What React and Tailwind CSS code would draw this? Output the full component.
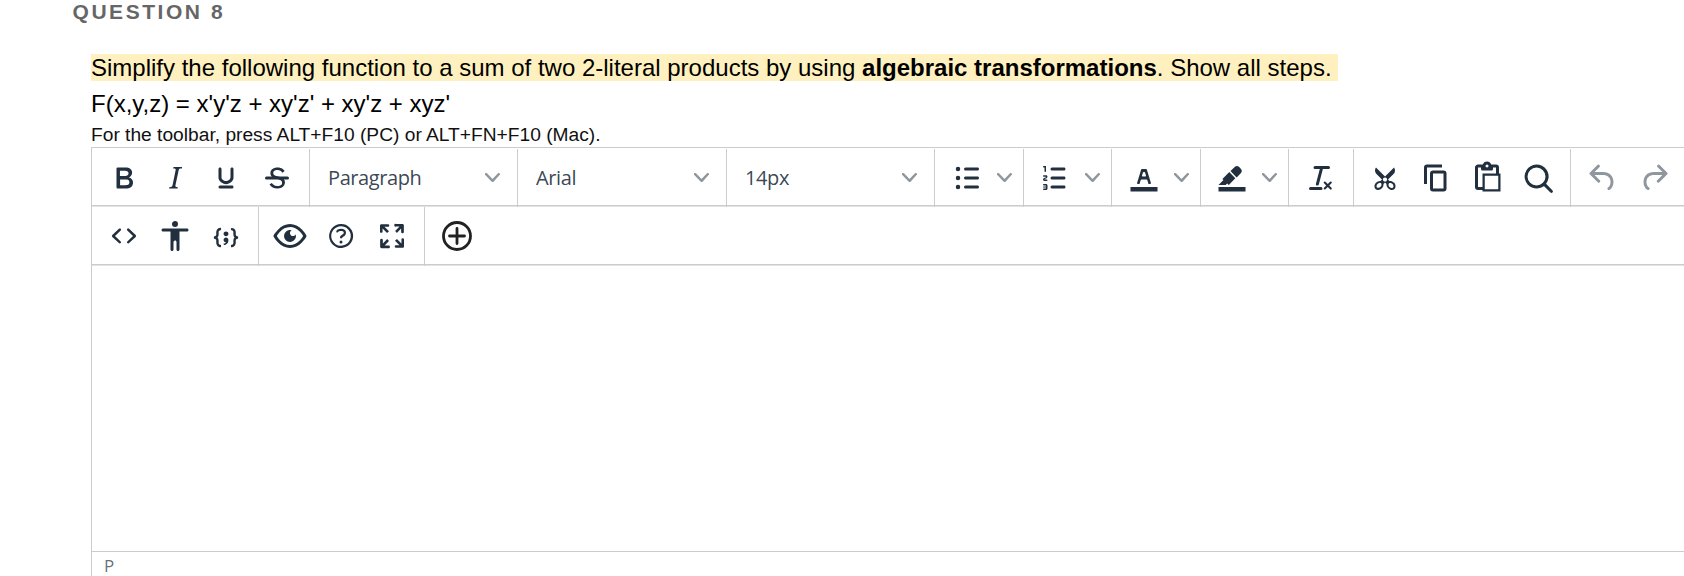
const ICONS = {
  bold: "M7.8 19c-.3 0-.5 0-.6-.2l-.2-.5V5.7c0-.2 0-.4.2-.5l.6-.2h5c1.5 0 2.7.3 3.5 1 .7.6 1.1 1.4 1.1 2.5a3 3 0 0 1-.6 1.9c-.4.6-1 1-1.6 1.2.4.1.9.3 1.3.6s.8.7 1 1.2c.4.4.5 1 .5 1.6 0 1.3-.4 2.3-1.3 3-.8.7-2.1 1-3.8 1H7.8zm5-8.3c.6 0 1.2-.1 1.6-.5.4-.3.6-.7.6-1.3 0-1.1-.8-1.7-2.3-1.7H9.3v3.5h3.4zm.5 6c.7 0 1.3-.1 1.7-.4.4-.4.6-.9.6-1.5s-.2-1-.7-1.4c-.4-.3-1-.4-2-.4H9.4v3.8h4z",
  italic: "M16.7 4.7l-.1.9h-.3c-.6 0-1 0-1.4.3-.3.3-.4.6-.5 1.1l-2.1 9.8v.6c0 .5.4.8 1.4.8h.2l-.2.8H8l.2-.8h.2c1.1 0 1.8-.5 2-1.5l2-9.8.1-.5c0-.6-.4-.8-1.4-.8h-.3l.2-.9h5.8z",
  underline: "M16 5c.6 0 1 .4 1 1v5.5a4 4 0 0 1-.4 1.8l-1 1.4a5.3 5.3 0 0 1-5.5 1 5 5 0 0 1-1.6-1c-.5-.4-.8-.9-1.1-1.4a4 4 0 0 1-.4-1.8V6c0-.6.4-1 1-1s1 .4 1 1v5.5c0 .3 0 .6.2 1l.6.7a3.3 3.3 0 0 0 2.2.8 3.4 3.4 0 0 0 2.2-.8c.3-.2.4-.5.6-.8l.2-.9V6c0-.6.4-1 1-1zM8 17h8c.6 0 1 .4 1 1s-.4 1-1 1H8a1 1 0 0 1 0-2z",
  strike: "M15.6 8.5c-.5-.7-1-1.1-1.3-1.3-.6-.4-1.3-.6-2-.6-2.7 0-2.8 1.7-2.8 2.1 0 1.6 1.8 2 3.2 2.3 4.4.9 4.6 2.8 4.6 3.9 0 1.4-.7 4.1-5 4.1A6.2 6.2 0 0 1 7 16.4l1.5-1.1c.4.6 1.6 2 3.7 2 1.6 0 2.5-.4 3-1.2.4-.8.3-2-.8-2.6-.7-.4-1.6-.7-2.9-1-1-.2-3.9-.8-3.9-3.6C7.6 6 10.3 5 12.4 5c2.9 0 4.2 1.6 4.7 2.4l-1.5 1.1z",
  strikeBar: "M5 11h14a1 1 0 0 1 0 2H5a1 1 0 0 1 0-2z",
  bullets: "M11 5h8c.6 0 1 .4 1 1s-.4 1-1 1h-8a1 1 0 0 1 0-2zm0 6h8c.6 0 1 .4 1 1s-.4 1-1 1h-8a1 1 0 0 1 0-2zm0 6h8c.6 0 1 .4 1 1s-.4 1-1 1h-8a1 1 0 0 1 0-2zM4.500 6a1.500 1.500 0 1 1 3 0a1.500 1.500 0 1 1-3 0zM4.500 12a1.500 1.500 0 1 1 3 0a1.500 1.500 0 1 1-3 0zM4.500 18a1.500 1.500 0 1 1 3 0a1.500 1.500 0 1 1-3 0z",
  numbers: "M10 17h8c.6 0 1 .4 1 1s-.4 1-1 1h-8a1 1 0 0 1 0-2zm0-6h8c.6 0 1 .4 1 1s-.4 1-1 1h-8a1 1 0 0 1 0-2zm0-6h8c.6 0 1 .4 1 1s-.4 1-1 1h-8a1 1 0 1 1 0-2zM6 4v3.500c0 .3-.2.5-.5.5a.5.5 0 0 1-.5-.5V5h-.5a.5.5 0 0 1 0-1H6zm-1 8.800l.2.2h1.300c.3 0 .5.2.5.5s-.2.5-.5.5H4.900a1 1 0 0 1-.9-1V13c0-.4.3-.8.6-1l1.200-.4.2-.3a.2.2 0 0 0-.2-.2H4.500a.5.5 0 0 1-.5-.5c0-.3.2-.5.5-.5h1.600c.5 0 .9.4.9 1v.1c0 .4-.3.8-.6 1l-1.200.4-.2.3zM7 17v2c0 .6-.4 1-1 1H4.500a.5.5 0 0 1 0-1h1.200c.2 0 .3-.1.3-.3 0-.2-.1-.3-.3-.3H4.400a.4.4 0 1 1 0-.8h1.300c.2 0 .3-.1.3-.3 0-.2-.1-.3-.3-.3H4.500a.5.5 0 1 1 0-1H6c.6 0 1 .4 1 1z",
  textColor: "M3 18h18v3H3zM8.700 16h-.8a.5.5 0 0 1-.5-.6l2.700-9c.1-.3.3-.4.5-.4h2.800c.2 0 .4.1.5.4l2.700 9a.5.5 0 0 1-.5.6h-.8a.5.5 0 0 1-.4-.4l-.7-2.200c0-.3-.3-.4-.5-.4h-3.400c-.2 0-.4.1-.5.4l-.7 2.200c0 .3-.2.4-.4.4zm2.600-7.600l-.6 2a.5.5 0 0 0 .5.6h1.600a.5.5 0 0 0 .5-.6l-.6-2c0-.3-.3-.4-.5-.4h-.4c-.2 0-.4.1-.5.4z",
  highlight: "M3 18h18v3H3zM7.700 16.700H3l3.300-3.300-.7-.8L10.200 8l4 4.100-4 4.200c-.2.2-.6.2-.8 0l-.6-.7-1.100 1.100zm5-7.500L11 7.400l3-2.900a2 2 0 0 1 2.600 0L18 6c.7.7.7 2 0 2.700l-2.900 2.900-1.800-1.800-.5-.6",
  clear: "M13.2 6a1 1 0 0 1 0 .2l-2.6 10a1 1 0 0 1-1 .8h-.2a.8.8 0 0 1-.8-1l2.6-10H8a1 1 0 1 1 0-2h9a1 1 0 0 1 0 2h-3.800zM5 18h7a1 1 0 0 1 0 2H5a1 1 0 0 1 0-2zm13 1.500L16.500 18 15 19.500a.7.7 0 0 1-1-1l1.500-1.500-1.500-1.500a.7.7 0 0 1 1-1l1.500 1.500 1.500-1.500a.7.7 0 0 1 1 1L17.500 17l1.500 1.500a.7.7 0 0 1-1 1z",
  cut: "M18 15c.6.7 1 1.4 1 2.3 0 .8-.2 1.5-.7 2l-.8.5-1 .2c-.4 0-.8 0-1.2-.3a3.9 3.9 0 0 1-2.1-2.2c-.2-.5-.3-1-.2-1.5l-1-1-1 1c0 .5 0 1-.2 1.5-.1.5-.4 1-.9 1.4-.3.4-.7.6-1.2.8l-1.2.3c-.4 0-.7 0-1-.2-.3 0-.6-.3-.8-.5-.5-.5-.8-1.2-.7-2 0-.9.4-1.6 1-2.2A3.700 3.700 0 0 1 8.600 14H9l1-1-4-4-.5-1a3.300 3.300 0 0 1 0-2c0-.4.3-.7.5-1l6 6 6-6 .5 1a3.300 3.300 0 0 1 0 2c0 .4-.3.7-.5 1l-4 4 1 1h.5c.4 0 .8 0 1.200.3.5.2.9.4 1.200.8zm-8.500 2.200l.1-.4v-.4-.4a1 1 0 0 0-.2-.5 1 1 0 0 0-.4-.2 1.600 1.600 0 0 0-.8 0 2.600 2.600 0 0 0-.8.3 2.500 2.500 0 0 0-.9 1.100l-.1.4v.7l.2.5.5.2h.7a2.500 2.500 0 0 0 .8-.3 2.800 2.800 0 0 0 1-1zm2.500-2.800c.4 0 .7-.1 1-.4.3-.3.4-.6.4-1s-.1-.7-.4-1c-.3-.3-.6-.4-1-.4s-.7.1-1 .4c-.3.3-.4.6-.4 1s.1.7.4 1c.3.3.6.4 1 .4zm5.400 4l.2-.5v-.4-.3a2.600 2.600 0 0 0-.3-.8 2.400 2.400 0 0 0-.7-.7 2.500 2.500 0 0 0-.8-.3 1.500 1.500 0 0 0-.8 0 1 1 0 0 0-.4.2 1 1 0 0 0-.2.5 1.500 1.500 0 0 0 0 .7v.4l.3.4.3.4a2.800 2.800 0 0 0 .8.5l.4.1h.7l.5-.2z",
  copy: "M16 3H6a2 2 0 0 0-2 2v11h2V5h10V3zm1 4a2 2 0 0 1 2 2v10a2 2 0 0 1-2 2h-7a2 2 0 0 1-2-2V9c0-1.200.9-2 2-2h7zm0 12V9h-7v10h7z",
  paste: "M18 9V5h-2v1c0 .6-.4 1-1 1H9a1 1 0 0 1-1-1V5H6v13h3V9h9zM9 20H6a2 2 0 0 1-2-2V5c0-1.100.9-2 2-2h3.200A3 3 0 0 1 12 1a3 3 0 0 1 2.800 2H18a2 2 0 0 1 2 2v4h1v12H9v-1zm1.500-9.500v9h9v-9h-9zM12 3a1 1 0 0 0-1 1c0 .5.4 1 1 1s1-.5 1-1-.4-1-1-1z",
  search: "M16 17.3a8 8 0 1 1 1.4-1.4l4.3 4.4a1 1 0 0 1-1.400 1.400l-4.400-4.300zm-5-.3a6 6 0 1 0 0-12 6 6 0 0 0 0 12z",
  undo: "M6.4 8H12c3.7 0 6.2 2 6.8 5.1.6 2.7-.4 5.6-2.3 6.8a1 1 0 0 1-1-1.8c1.1-.6 1.8-2.7 1.4-4.6-.5-2.1-2.1-3.5-4.9-3.5H6.4l3.3 3.3a1 1 0 1 1-1.4 1.4l-5-5a1 1 0 0 1 0-1.4l5-5a1 1 0 0 1 1.4 1.4L6.4 8z",
  code: "M9.8 15.7c.3.3.3.8 0 1-.3.4-.9.4-1.2 0l-4.4-4.1a.8.8 0 0 1 0-1.2l4.4-4.2c.3-.3.9-.3 1.2 0 .3.3.3.8 0 1.100L6 12l3.800 3.700zM14.200 15.700c-.3.3-.3.8 0 1 .4.4.9.4 1.200 0l4.400-4.100c.3-.3.3-.9 0-1.200l-4.400-4.200a.8.8 0 0 0-1.200 0c-.3.3-.3.8 0 1.100L18 12l-3.800 3.700z",
  a11y: "M12 2a2 2 0 0 1 2 2 2 2 0 0 1-2 2 2 2 0 0 1-2-2c0-1.1.9-2 2-2zm8 7h-5v12c0 .6-.4 1-1 1a1 1 0 0 1-1-1v-5c0-.6-.4-1-1-1a1 1 0 0 0-1 1v5c0 .6-.4 1-1 1a1 1 0 0 1-1-1V9H4a1 1 0 1 1 0-2h16c.6 0 1 .4 1 1s-.4 1-1 1z",
  sample: "M7.1 11a2.8 2.8 0 0 1-.8 2 2.8 2.8 0 0 1 .8 2v1.7c0 .3.1.6.4.8.2.3.5.4.8.4.3 0 .4.2.4.4v.8c0 .2-.1.4-.4.4-.7 0-1.4-.3-2-.8-.5-.6-.8-1.3-.8-2V15c0-.3-.1-.6-.4-.8-.2-.3-.5-.4-.8-.4a.4.4 0 0 1-.4-.4v-.8c0-.2.2-.4.4-.4.3 0 .6-.1.8-.4.3-.2.4-.5.4-.8V9.300c0-.7.3-1.400.8-2 .6-.5 1.300-.8 2-.8.3 0 .4.2.4.4v.8c0 .2-.1.4-.4.4-.3 0-.6.1-.8.4-.3.2-.4.5-.4.8V11zm9.800 0V9.300c0-.3-.1-.6-.4-.8-.2-.3-.5-.4-.8-.4a.4.4 0 0 1-.4-.4V7c0-.2.1-.4.4-.4.7 0 1.400.3 2 .8.5.6.8 1.300.8 2V11c0 .3.1.6.4.8.2.3.5.4.8.4.2 0 .4.2.4.4v.8c0 .2-.2.4-.4.4-.3 0-.6.1-.8.4-.3.2-.4.5-.4.8v1.700c0 .7-.3 1.400-.8 2-.6.5-1.300.8-2 .8a.4.4 0 0 1-.4-.4v-.8c0-.2.1-.4.4-.4.3 0 .6-.1.8-.4.3-.2.4-.5.4-.8V15a2.800 2.800 0 0 1 .8-2 2.800 2.800 0 0 1-.8-2zm-3.300-.4c0 .4-.1.8-.5 1.100-.3.3-.7.5-1.100.5-.4 0-.8-.2-1.100-.5-.4-.3-.5-.7-.5-1.100 0-.5.1-.9.5-1.200.3-.3.7-.4 1.100-.4.4 0 .8.1 1.100.4.4.3.5.7.5 1.200zM12 13c.4 0 .8.1 1.100.5.4.3.5.7.5 1.100 0 1-.1 1.600-.5 2a3 3 0 0 1-1.100 1c-.4.3-.8.4-1.100.4a.5.5 0 0 1-.5-.5V17a3 3 0 0 0 1-.2l.6-.6c-.6 0-1-.2-1.300-.5-.2-.3-.3-.7-.3-1 0-.5.1-1 .5-1.200.3-.4.7-.5 1.100-.5z",
  preview: "M3.5 12.5c.5.8 1.1 1.6 1.8 2.3 2 2 4.2 3.2 6.7 3.2s4.7-1.2 6.7-3.2a16.2 16.2 0 0 0 2.1-2.8 15.7 15.7 0 0 0-2.1-2.8c-2-2-4.2-3.2-6.7-3.2a9.3 9.3 0 0 0-6.7 3.2A16.2 16.2 0 0 0 3.2 12c0 .2.2.3.3.5zm-2.4-1l.7-1.2L4 7.8C6.2 5.4 8.9 4 12 4c3 0 5.8 1.4 8.1 3.8a18.2 18.2 0 0 1 2.8 3.7v1l-.7 1.2-2.1 2.5c-2.3 2.4-5 3.8-8.1 3.8-3 0-5.8-1.4-8.1-3.8a18.2 18.2 0 0 1-2.8-3.7 1 1 0 0 1 0-1zm12-3.3a2 2 0 1 0 2.7 2.6 4 4 0 1 1-2.6-2.6z",
  help: "M12 5.5a6.5 6.5 0 0 0-6 9 6.3 6.3 0 0 0 1.4 2l1 1a6.3 6.3 0 0 0 3.6 1 6.5 6.5 0 0 0 6-9 6.3 6.3 0 0 0-1.4-2l-1-1a6.3 6.3 0 0 0-3.6-1zM12 4a7.8 7.8 0 0 1 5.700 2.300A8 8 0 1 1 12 4zM9.600 9.700a.7.7 0 0 1-.7-.8c0-1.100 1.500-1.800 3.200-1.800 1.800 0 3.200.8 3.200 2.400 0 1.400-.4 2.100-1.500 2.800-.2 0-.3.1-.3.2a2 2 0 0 0-.8.8.8.8 0 0 1-1.400-.6c.3-.7.8-1 1.300-1.500l.4-.2c.7-.4.8-.6.8-1.500 0-.5-.6-.9-1.700-.9-.5 0-1 .1-1.400.3-.2 0-.3.1-.3.2v-.2c0 .4-.4.8-.8.8zM11 16a1 1 0 1 1 2 0a1 1 0 1 1-2 0z",
  fullscreen: "M15.3 10l-1.2-1.3 2.9-3h-2.3a.9.9 0 1 1 0-1.7H19c.5 0 .9.4.9.9v4.4a.9.9 0 1 1-1.8 0V7l-2.9 3zm0 4l3 3v-2.3a.9.9 0 1 1 1.7 0V19c0 .5-.4.9-.9.9h-4.4a.9.9 0 1 1 0-1.800H17l-3-2.900 1.300-1.200zM10 15.400l-2.900 3h2.300a.9.9 0 1 1 0 1.700H5a.9.9 0 0 1-.9-.9v-4.400a.9.9 0 1 1 1.800 0V17l2.900-3 1.200 1.300zM8.700 10L5.700 7v2.300a.9.9 0 0 1-1.700 0V5c0-.5.4-.9.9-.9h4.400a.9.9 0 0 1 0 1.800H7l3 2.900-1.300 1.200z",
}

function Icon({ name }) {
  return (
    <svg viewBox="0 0 24 24" className="w-9 h-9 shrink-0" fill="currentColor" fillRule="evenodd">
      <path d={ICONS[name]} />
      {name === "strike" && <path d={ICONS.strikeBar} />}
    </svg>
  )
}

function Chevron() {
  return (
    <svg viewBox="0 0 10 10" className="w-[15px] h-[15px] shrink-0 opacity-50" fill="currentColor">
      <path d="M8.7 2.2c.3-.3.8-.3 1 0 .4.4.4.9 0 1.2L5.7 7.8c-.3.3-.9.3-1.2 0L.2 3.4a.8.8 0 0 1 0-1.2c.3-.3.8-.3 1.1 0L5 6l3.7-3.8z" />
    </svg>
  )
}

function Group({ className = "", children }) {
  return (
    <div className={`flex items-center shrink-0 border-r border-[#ccc] -mb-0.5 pb-px ${className}`}>
      {children}
    </div>
  )
}

function Button({ icon, className = "" }) {
  return (
    <button className={`w-[51px] h-[51px] shrink-0 flex items-center justify-center ${className}`}>
      <Icon name={icon} />
    </button>
  )
}

function SplitButton({ icon, className }) {
  return (
    <Group className={className}>
      <button className="flex items-center gap-3">
        <Icon name={icon} />
        <Chevron />
      </button>
    </Group>
  )
}

function Select({ label, className }) {
  return (
    <Group className={className}>
      <button className="flex w-full items-center justify-between pl-[18px] pr-[17px]">
        <span className="font-['Open_Sans','Noto_Sans',sans-serif] text-[20px] tracking-[-0.4px] leading-7 pt-px text-[#222f3e]/90">{label}</span>
        <Chevron />
      </button>
    </Group>
  )
}

export default function App() {
  return (
    <div className="h-[576px] w-full overflow-hidden bg-white font-['Liberation_Sans',Arial,sans-serif] flex flex-col">
      <h3 className="pl-[72.5px] h-[50px] text-[21px] leading-6 font-bold tracking-[2.55px] text-[#666]">QUESTION 8</h3>

      <div className="pl-[91px] h-[97px] text-2xl leading-9 text-black whitespace-nowrap">
        <p>
          <span className="bg-[#fff1bf] whitespace-pre">
            Simplify the following function to a sum of two 2-literal products by using{" "}
            <strong>algebraic transformations</strong>. Show all steps.{" "}
          </span>
        </p>
        <p>F(x,y,z) = x'y'z + xy'z' + xy'z + xyz'</p>
        <p className="text-[19.2px] leading-[26px] text-[#111]">For the toolbar, press ALT+F10 (PC) or ALT+FN+F10 (Mac).</p>
      </div>

      {/* Editor */}
      <div className="ml-[91px] flex-1 flex flex-col border-l border-t border-[#ccc] text-[#222f3e]">
        <div className="flex h-[57px] mt-px mb-px shrink-0 border-b border-[#ccc] shadow-[0_1px_0_#e3e3e3]">
          <Group className="w-[218px] pl-1.5">
            <Button icon="bold" />
            <Button icon="italic" />
            <Button icon="underline" />
            <Button icon="strike" />
          </Group>
          <Select label="Paragraph" className="w-[208px]" />
          <Select label="Arial" className="w-[209px]" />
          <Select label="14px" className="w-[208px]" />
          <SplitButton icon="bullets" className="w-[89px] pl-3.5" />
          <SplitButton icon="numbers" className="w-[88px] pl-[13px]" />
          <SplitButton icon="textColor" className="w-[89px] pl-3.5" />
          <SplitButton icon="highlight" className="w-[88px] pl-[13px]" />
          <Group className="w-[65px] pl-1.5">
            <Button icon="clear" />
          </Group>
          <Group className="w-[217px] pl-[5px]">
            <Button icon="cut" />
            <Button icon="copy" />
            <Button icon="paste" />
            <Button icon="search" />
          </Group>
          <div className="flex items-center -mb-0.5 pb-px pl-1.5 shrink-0 opacity-50">
            <Button icon="undo" />
            <Button icon="undo" className="ml-px -scale-x-100" />
          </div>
        </div>

        <div className="flex h-[58px] mb-px shrink-0 border-b border-[#ccc] shadow-[0_1px_0_#e3e3e3]">
          <Group className="w-[167px] pl-1.5">
            <Button icon="code" />
            <Button icon="a11y" />
            <Button icon="sample" />
          </Group>
          <Group className="w-[166px] pl-[5px]">
            <Button icon="preview" />
            <Button icon="help" />
            <Button icon="fullscreen" />
          </Group>
          <button className="w-16 flex items-center justify-center text-[#222]">
            <svg viewBox="0 0 30 30" className="w-[30px] h-[30px]" fill="none" stroke="currentColor" strokeWidth="2.8">
              <circle cx="15" cy="15" r="13.500" />
              <path d="M15 7.500v15M7.500 15h15" strokeLinecap="round" />
            </svg>
          </button>
        </div>

        <div className="flex-1" />

        <div className="h-[25px] shrink-0 border-t border-[#ccc] pl-3 font-['Open_Sans','Noto_Sans',sans-serif] text-[17px] leading-[27px] text-[#222f3e]/70">
          P
        </div>
      </div>
    </div>
  )
}
